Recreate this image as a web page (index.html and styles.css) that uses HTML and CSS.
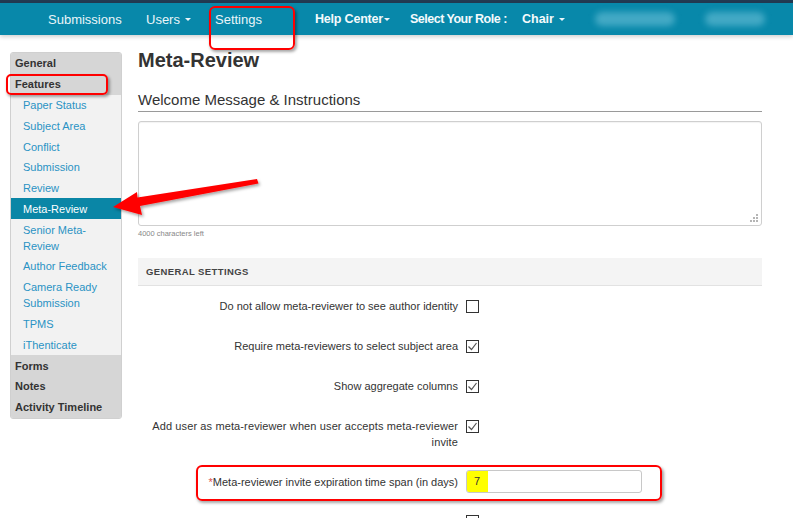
FILE: index.html
```html
<!DOCTYPE html>
<html>
<head>
<meta charset="utf-8">
<link rel="stylesheet" href="styles.css">
</head>
<body>
<div class="topstrip"></div>
<nav class="navbar">
  <div class="nav-item w-sub">Submissions</div>
  <div class="nav-item w-users">Users<span class="caret"></span></div>
  <div class="nav-item w-set">Settings</div>
  <div class="nav-item w-help bold">Help Center<span class="caret tight"></span></div>
  <div class="nav-item w-role bold">Select Your Role :</div>
  <div class="nav-item w-chair bold">Chair<span class="caret"></span></div>
  <div class="nav-item w-blob1"><span class="blob b1"></span></div>
  <div class="nav-item"><span class="blob b2"></span></div>
</nav>
<div class="main">
  <aside class="sidebar">
    <div class="sb-head">General</div>
    <div class="sb-head">Features</div>
    <div class="sb-item">Paper Status</div>
    <div class="sb-item">Subject Area</div>
    <div class="sb-item">Conflict</div>
    <div class="sb-item">Submission</div>
    <div class="sb-item">Review</div>
    <div class="sb-item active">Meta-Review</div>
    <div class="sb-item">Senior Meta-Review</div>
    <div class="sb-item">Author Feedback</div>
    <div class="sb-item">Camera Ready Submission</div>
    <div class="sb-item">TPMS</div>
    <div class="sb-item">iThenticate</div>
    <div class="sb-head">Forms</div>
    <div class="sb-head">Notes</div>
    <div class="sb-head">Activity Timeline</div>
  </aside>
  <section class="content">
    <h2 class="title">Meta-Review</h2>
    <h3 class="section-head">Welcome Message &amp; Instructions</h3>
    <div class="textarea">
      <svg class="grip" width="8" height="8" viewBox="0 0 8 8"><g fill="#b5b5b5"><rect x="6" y="0" width="2" height="2"/><rect x="3" y="3" width="2" height="2"/><rect x="6" y="3" width="2" height="2"/><rect x="0" y="6" width="2" height="2"/><rect x="3" y="6" width="2" height="2"/><rect x="6" y="6" width="2" height="2"/></g></svg>
    </div>
    <div class="chars">4000 characters left</div>
    <div class="panel">GENERAL SETTINGS</div>
    <div class="row">
      <div class="label">Do not allow meta-reviewer to see author identity</div>
      <div class="ctrl"><span class="cb"></span></div>
    </div>
    <div class="row">
      <div class="label">Require meta-reviewers to select subject area</div>
      <div class="ctrl"><span class="cb"><svg width="13" height="13" viewBox="0 0 13 13"><polyline points="2.5,6.5 5.5,9.5 10.5,3" fill="none" stroke="#555" stroke-width="1.2"/></svg></span></div>
    </div>
    <div class="row">
      <div class="label">Show aggregate columns</div>
      <div class="ctrl"><span class="cb"><svg width="13" height="13" viewBox="0 0 13 13"><polyline points="2.5,6.5 5.5,9.5 10.5,3" fill="none" stroke="#555" stroke-width="1.2"/></svg></span></div>
    </div>
    <div class="row">
      <div class="label wide">Add user as meta-reviewer when user accepts meta-reviewer invite</div>
      <div class="ctrl"><span class="cb"><svg width="13" height="13" viewBox="0 0 13 13"><polyline points="2.5,6.5 5.5,9.5 10.5,3" fill="none" stroke="#555" stroke-width="1.2"/></svg></span></div>
    </div>
    <div class="row row-input">
      <div class="label"><span class="req">*</span>Meta-reviewer invite expiration time span (in days)</div>
      <div class="ctrl"><div class="input"><span class="hl">7</span></div></div>
    </div>
    <div class="row">
      <div class="label"></div>
      <div class="ctrl"><span class="cb"></span></div>
    </div>
  </section>
</div>
<div class="anno box-settings"></div>
<div class="anno box-features"></div>
<div class="anno box-expire"></div>
<svg class="arrow" width="793" height="518" viewBox="0 0 793 518">
  <defs><filter id="sh" x="-10%" y="-10%" width="130%" height="140%"><feDropShadow dx="1.5" dy="2" stdDeviation="1.5" flood-color="#000" flood-opacity="0.35"/></filter></defs>
  <polygon filter="url(#sh)" fill="#f00" points="113,207 137,192 137.5,197.5 257,179 258.5,183.5 140,206 142,215"/>
</svg>
</body>
</html>
```
FILE: styles.css
```css
* { box-sizing: border-box; }
html, body { margin: 0; padding: 0; }
body {
  font-family: "Liberation Sans", Arial, sans-serif;
  color: #333;
  background: #fff;
  width: 793px;
  height: 518px;
  overflow: hidden;
  position: relative;
}
.topstrip { height: 3px; background: #223a52; }
.navbar {
  height: 32px;
  background: #0888aa;
  display: flex;
  align-items: center;
  padding-left: 48px;
  box-shadow: 0 2px 4px rgba(0,0,0,0.18);
  position: relative;
  z-index: 1;
}
.nav-item {
  color: #eaf5f9;
  font-size: 13px;
  display: flex;
  align-items: center;
  white-space: nowrap;
  flex: 0 0 auto;
}
.nav-item.bold { font-weight: bold; font-size: 12.5px; color: #f4fafc; }
.w-sub { width: 98px; }
.w-users { width: 69px; }
.w-set { width: 100px; }
.w-help { width: 95px; letter-spacing: -0.2px; }
.w-role { width: 112px; letter-spacing: -0.5px; }
.w-chair { width: 73px; }
.w-blob1 { width: 110px; }
.caret {
  display: inline-block;
  width: 0; height: 0;
  border-left: 3px solid transparent;
  border-right: 3px solid transparent;
  border-top: 3px solid #eaf5f9;
  margin-left: 5px;
  margin-top: 1px;
}
.caret.tight { margin-left: 1px; }
.blob {
  display: block;
  height: 14px;
  border-radius: 7px;
  background: rgba(140, 210, 230, 0.45);
  filter: blur(3px);
}
.b1 { width: 80px; }
.b2 { width: 60px; }

.main { display: flex; align-items: flex-start; }
.sidebar {
  margin: 17px 0 0 10px;
  width: 112px;
  background: #f2f2f2;
  border: 1px solid #d0d0d0;
  border-radius: 3px;
  overflow: hidden;
  font-size: 11px;
}
.sb-head {
  background: #d6d6d6;
  font-weight: bold;
  color: #333;
  line-height: 16px;
  padding: 2.4px 4px;
}
.sb-item {
  color: #2a92c4;
  line-height: 16px;
  padding: 2.4px 4px 2.4px 12px;
}
.sb-item.active { background: #0a86a6; color: #fff; }

.content {
  margin-left: 16px;
  width: 624px;
}
.title {
  font-size: 20px;
  font-weight: bold;
  line-height: 24px;
  margin: 13px 0 0 0;
  color: #333;
}
.section-head {
  font-size: 15px;
  font-weight: normal;
  line-height: 20px;
  margin: 18px 0 0 0;
  padding-bottom: 1px;
  border-bottom: 1px solid #9a9a9a;
  color: #333;
}
.textarea {
  margin-top: 9px;
  height: 105px;
  border: 1px solid #cfcfcf;
  border-radius: 3px;
  position: relative;
  box-shadow: inset 0 1px 1px rgba(0,0,0,0.05);
}
.grip { position: absolute; right: 3px; bottom: 3px; }
.chars {
  font-size: 7.5px;
  color: #888;
  line-height: 10px;
  margin-top: 3px;
}
.panel {
  margin-top: 19px;
  height: 28px;
  background: #f4f4f4;
  border-bottom: 1px solid #e2e2e2;
  font-size: 9.5px;
  font-weight: bold;
  color: #444;
  letter-spacing: 0.4px;
  padding-left: 8px;
  display: flex;
  align-items: center;
}
.row {
  display: flex;
  padding: 12px 0;
  font-size: 11px;
  line-height: 16px;
}
.label {
  width: 320px;
  text-align: right;
  color: #333;
}
.label.wide { letter-spacing: 0.12px; }
.ctrl { margin-left: 8px; display: flex; align-items: flex-start; }
.cb {
  display: block;
  width: 13px;
  height: 13px;
  border: 1px solid #333;
  background: #fff;
  margin-top: 1.5px;
  position: relative;
}
.cb svg { position: absolute; left: -1px; top: -1px; }
.row-input { padding: 8px 0 8px 0; align-items: center; }
.req { color: #d9534f; }
.input {
  width: 176px;
  height: 23px;
  border: 1px solid #c8c8c8;
  border-radius: 3px;
  display: flex;
  overflow: hidden;
}
.hl {
  width: 21px;
  background: #ffff00;
  padding-left: 7px;
  line-height: 21px;
  font-size: 11px;
  color: #333;
}

.anno {
  position: absolute;
  border: 2px solid #ff0000;
  border-radius: 6px;
  box-shadow: 1.5px 2px 3px rgba(0,0,0,0.35);
  z-index: 5;
}
.box-settings { left: 209px; top: 6px; width: 86px; height: 44px; }
.box-features { left: 6px; top: 74px; width: 102px; height: 21px; border-radius: 5px; }
.box-expire { left: 196px; top: 465px; width: 466px; height: 36px; }
.arrow { position: absolute; left: 0; top: 0; z-index: 6; pointer-events: none; }
```
